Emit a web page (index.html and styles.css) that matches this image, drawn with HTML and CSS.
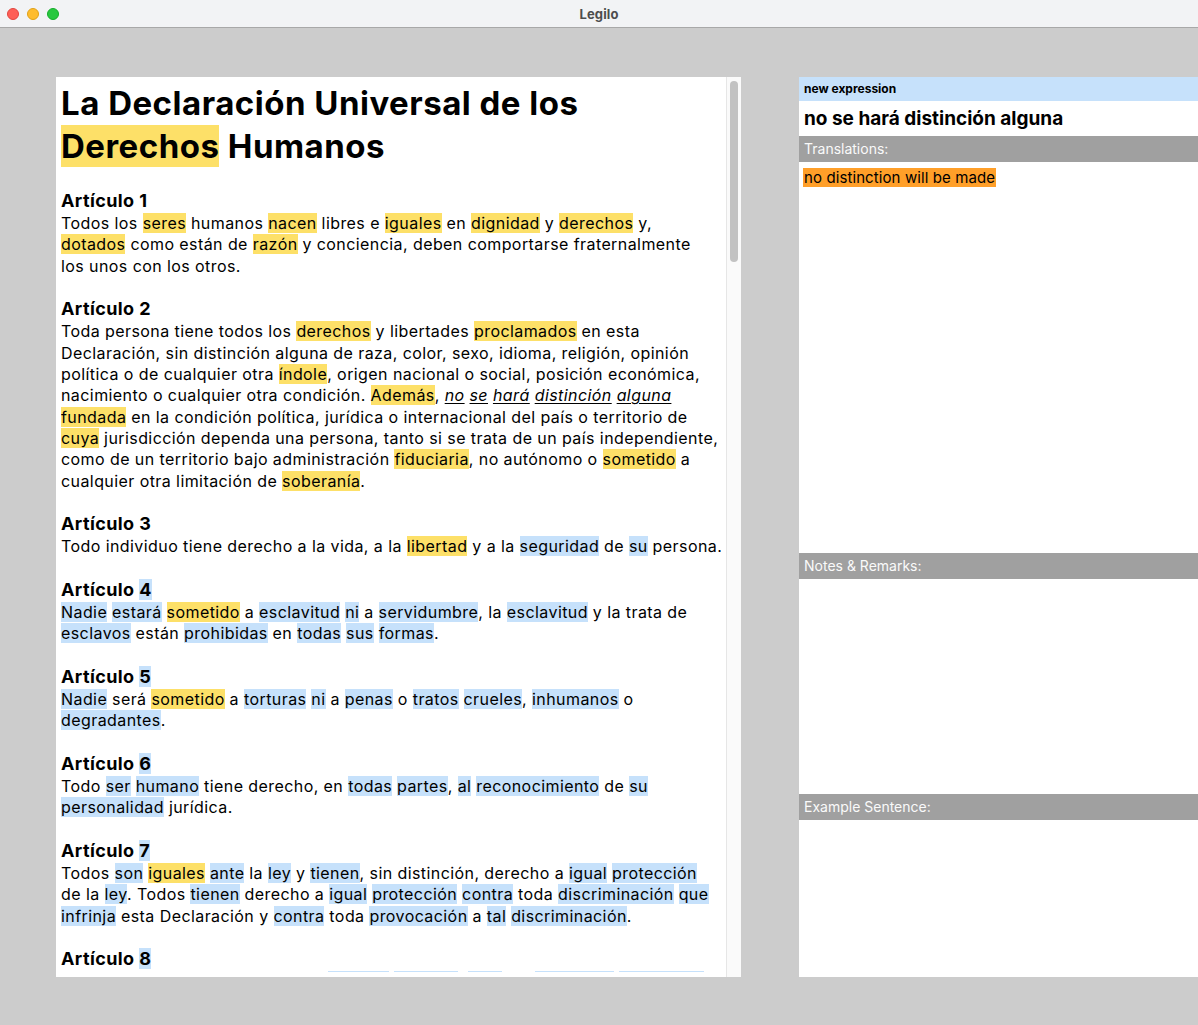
FILE: index.html
```html
<!DOCTYPE html>
<html lang="es">
<head>
<meta charset="utf-8">
<title>Legilo</title>
<link rel="stylesheet" href="styles.css">
</head>
<body>
<div class="window">
  <header class="titlebar">
    <div class="lights">
      <span class="light red"></span>
      <span class="light yellow"></span>
      <span class="light green"></span>
    </div>
    <div class="wintitle">Legilo</div>
    <div class="spacer"></div>
  </header>
  <main class="main">
    <section class="reader">
      <div class="pane">
        <div class="doc">
          <h1 class="doc-title">La Declaración Universal de los<br><span class="k title-k">Derechos</span> Humanos</h1>

          <article class="art">
            <h2 class="art-h">Artículo 1</h2>
            <p class="art-p">Todos los <span class="k">seres</span> humanos <span class="k">nacen</span> libres e <span class="k">iguales</span> en <span class="k">dignidad</span> y <span class="k">derechos</span> y,<br><span class="k">dotados</span> como están de <span class="k">razón</span> y conciencia, deben comportarse fraternalmente<br>los unos con los otros.</p>
          </article>

          <article class="art">
            <h2 class="art-h">Artículo 2</h2>
            <p class="art-p">Toda persona tiene todos los <span class="k">derechos</span> y libertades <span class="k">proclamados</span> en esta<br>Declaración, sin distinción alguna de raza, color, sexo, idioma, religión, opinión<br>política o de cualquier otra <span class="k">índole</span>, origen nacional o social, posición económica,<br>nacimiento o cualquier otra condición. <span class="k">Además</span>, <span class="sel">no</span> <span class="sel">se</span> <span class="sel">hará</span> <span class="sel">distinción</span> <span class="sel">alguna</span><br><span class="k">fundada</span> en la condición política, jurídica o internacional del país o territorio de<br><span class="k">cuya</span> jurisdicción dependa una persona, tanto si se trata de un país independiente,<br>como de un territorio bajo administración <span class="k">fiduciaria</span>, no autónomo o <span class="k">sometido</span> a<br>cualquier otra limitación de <span class="k">soberanía</span>.</p>
          </article>

          <article class="art">
            <h2 class="art-h">Artículo 3</h2>
            <p class="art-p">Todo individuo tiene derecho a la vida, a la <span class="k">libertad</span> y a la <span class="n">seguridad</span> de <span class="n">su</span> persona.</p>
          </article>

          <article class="art">
            <h2 class="art-h">Artículo <span class="n">4</span></h2>
            <p class="art-p"><span class="n">Nadie</span> <span class="n">estará</span> <span class="k">sometido</span> a <span class="n">esclavitud</span> <span class="n">ni</span> a <span class="n">servidumbre</span>, la <span class="n">esclavitud</span> y la trata de<br><span class="n">esclavos</span> están <span class="n">prohibidas</span> en <span class="n">todas</span> <span class="n">sus</span> <span class="n">formas</span>.</p>
          </article>

          <article class="art">
            <h2 class="art-h">Artículo <span class="n">5</span></h2>
            <p class="art-p"><span class="n">Nadie</span> será <span class="k">sometido</span> a <span class="n">torturas</span> <span class="n">ni</span> a <span class="n">penas</span> o <span class="n">tratos</span> <span class="n">crueles</span>, <span class="n">inhumanos</span> o<br><span class="n">degradantes</span>.</p>
          </article>

          <article class="art">
            <h2 class="art-h">Artículo <span class="n">6</span></h2>
            <p class="art-p">Todo <span class="n">ser</span> <span class="n">humano</span> tiene derecho, en <span class="n">todas</span> <span class="n">partes</span>, <span class="n">al</span> <span class="n">reconocimiento</span> de <span class="n">su</span><br><span class="n">personalidad</span> jurídica.</p>
          </article>

          <article class="art">
            <h2 class="art-h">Artículo <span class="n">7</span></h2>
            <p class="art-p">Todos <span class="n">son</span> <span class="k">iguales</span> <span class="n">ante</span> la <span class="n">ley</span> y <span class="n">tienen</span>, sin distinción, derecho a <span class="n">igual</span> <span class="n">protección</span><br>de la <span class="n">ley</span>. Todos <span class="n">tienen</span> derecho a <span class="n">igual</span> <span class="n">protección</span> <span class="n">contra</span> toda <span class="n">discriminación</span> <span class="n">que</span><br><span class="n">infrinja</span> esta Declaración y <span class="n">contra</span> toda <span class="n">provocación</span> a <span class="n">tal</span> <span class="n">discriminación</span>.</p>
          </article>

          <article class="art">
            <h2 class="art-h">Artículo <span class="n">8</span></h2>
            <p class="art-p">Toda persona tiene derecho a un <span class="n">recurso</span> <span class="n">efectivo</span>, <span class="n">ante</span> los <span class="n">tribunales</span> <span class="n">nacionales</span><br>competentes, que la ampare contra actos que violen sus derechos fundamentales<br>reconocidos por la constitución o por la ley.</p>
          </article>
        </div>
      </div>
      <div class="scrollbar"><div class="thumb"></div></div>
    </section>

    <aside class="side">
      <div class="expr-label">new expression</div>
      <div class="expr">no se hará distinción alguna</div>
      <div class="sec-head">Translations:</div>
      <div class="sec-body translations"><span class="trans">no distinction will be made</span></div>
      <div class="sec-head">Notes &amp; Remarks:</div>
      <div class="sec-body notes"></div>
      <div class="sec-head">Example Sentence:</div>
      <div class="sec-body example"></div>
    </aside>
  </main>
</div>
</body>
</html>
```

FILE: styles.css
```css
* { box-sizing: border-box; }

html, body {
  margin: 0;
  padding: 0;
  height: 100%;
}

body {
  font-family: Inter, "Noto Sans", "DejaVu Sans", sans-serif;
  color: #000;
  background: #cccccc;
}

.window {
  width: 1198px;
  height: 1025px;
  display: flex;
  flex-direction: column;
  overflow: hidden;
}

/* ---------- title bar ---------- */
.titlebar {
  height: 28px;
  flex: none;
  background: #f2f3f5;
  border-bottom: 1px solid #a8a8a8;
  display: grid;
  grid-template-columns: 1fr auto 1fr;
  align-items: center;
}

.lights {
  display: flex;
  gap: 8px;
  padding-left: 7px;
}

.light {
  width: 12px;
  height: 12px;
  border-radius: 50%;
  display: block;
}
.light.red { background: #fe5f57; border: 0.5px solid #e2463f; }
.light.yellow { background: #febc2e; border: 0.5px solid #e1a116; }
.light.green { background: #28c840; border: 0.5px solid #14ae2a; }

.wintitle {
  font-size: 13px;
  font-weight: 700;
  color: #4d4d4d;
  letter-spacing: 0.1px;
}

/* ---------- main area ---------- */
.main {
  flex: 1;
  display: flex;
  gap: 58px;
  padding: 49px 0 48px 56px;
  min-height: 0;
}

.reader {
  width: 685px;
  flex: none;
  background: #fff;
  display: flex;
}

.pane {
  flex: 1;
  padding: 5px;
  display: flex;
  min-width: 0;
}

.doc {
  flex: 1;
  overflow: hidden;
  min-width: 0;
}

.scrollbar {
  width: 15px;
  flex: none;
  background: #fafafa;
  border-left: 1px solid #e6e6e6;
  padding: 4px 3px 0 3px;
}

.thumb {
  width: 8px;
  height: 181px;
  border-radius: 4px;
  background: #c2c2c2;
}

/* ---------- document ---------- */
.doc-title {
  margin: 0 0 21px;
  font-size: 33px;
  line-height: 43px;
  font-weight: 700;
  letter-spacing: 0.5px;
  white-space: nowrap;
}

.title-k {
  padding: 1px 0;
}

.art {
  margin: 0 0 20.33px;
}

.art-h {
  margin: 0;
  font-size: 18px;
  line-height: 24px;
  font-weight: 700;
  letter-spacing: 0.4px;
}

.art-p {
  margin: 0;
  font-size: 16px;
  line-height: 21.33px;
  letter-spacing: 0.42px;
  white-space: nowrap;
}

.k { background: #fde068; }
.n { background: #c6e1fb; }

.sel {
  font-style: italic;
  text-decoration: underline;
  text-underline-offset: 2px;
}

/* ---------- side panel ---------- */
.side {
  flex: 1;
  background: #fff;
  display: flex;
  flex-direction: column;
}

.expr-label {
  height: 24px;
  line-height: 24px;
  padding: 0 5px;
  background: #c6e1fb;
  font-size: 12px;
  font-weight: 700;
}

.expr {
  height: 35px;
  line-height: 36px;
  padding: 0 5px;
  font-size: 19px;
  font-weight: 700;
}

.sec-head {
  height: 26px;
  line-height: 26px;
  padding: 0 5px;
  background: #a0a0a0;
  color: #fafafa;
  font-size: 14px;
}

.sec-body { flex: none; }

.translations {
  height: 391px;
  padding: 5px 4px;
}

.trans {
  display: inline-block;
  background: #ff9f29;
  font-size: 15px;
  line-height: 19px;
  letter-spacing: 0.1px;
  padding: 0 1px;
}

.notes { height: 215px; }

.example { flex: 1; }
```
